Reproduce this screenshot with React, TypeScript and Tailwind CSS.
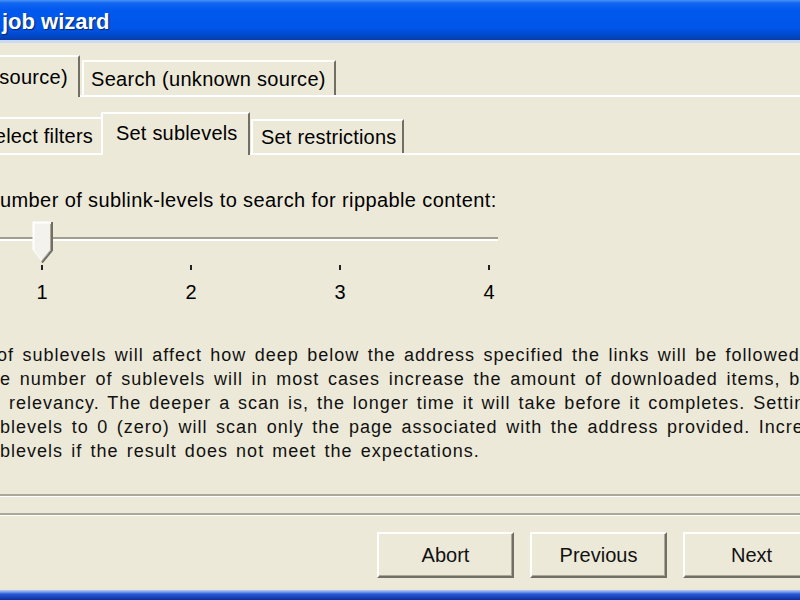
import React from "react";

const lines = [
  { text: "of sublevels will affect how deep below the address specified the links will be followed.", cls: "ml-[-3px] [word-spacing:2.4px]" },
  { text: "e number of sublevels will in most cases increase the amount of downloaded items, but", cls: "ml-[0px] [word-spacing:2.7px]" },
  { text: "relevancy. The deeper a scan is, the longer time it will take before it completes. Setting", cls: "ml-[9px] [word-spacing:1.9px]" },
  { text: "blevels to 0 (zero) will scan only the page associated with the address provided. Increase", cls: "ml-[0px] [word-spacing:2.6px]" },
  { text: "blevels if the result does not meet the expectations.", cls: "ml-[0px] [word-spacing:2.2px]" },
];

function Thumb() {
  return (
    <svg width="22" height="43" viewBox="0 0 22 43" className="absolute left-[32px] top-0">
      <path d="M1 1 H20 V29 L10 41 L1 29 Z" fill="#f3f2ec" />
      <path d="M1.5 29 V1.5 H19.5" fill="none" stroke="#ffffff" strokeWidth="2" />
      <path d="M1.5 29 L10 40" fill="none" stroke="#f8f8f4" strokeWidth="1.5" />
      <path d="M20 1 V29.5 L10 41.5" fill="none" stroke="#716f64" strokeWidth="2" />
      <path d="M18.5 3 V29 L10 39.5" fill="none" stroke="#aca899" strokeWidth="1" />
    </svg>
  );
}

function Button({ label }: { label: string }) {
  return (
    <div className="w-[137px] h-[46px] shrink-0 border-2 border-t-white border-l-white border-r-[#716f64] border-b-[#716f64] shadow-[inset_-1px_-1px_0_#aca899] bg-[#ECE9D8] text-[20px] text-[#111] flex items-center justify-center">
      {label}
    </div>
  );
}

export default function App() {
  const ticks = ["1", "2", "3", "4"];
  return (
    <div className="w-[800px] h-[600px] overflow-hidden bg-[#ECE9D8] flex flex-col font-['Liberation_Sans',Arial,sans-serif] text-black">
      {/* title bar */}
      <div className="h-[40px] shrink-0 bg-[linear-gradient(to_bottom,#4a95f7_0px,#1266f0_3px,#0058ee_10px,#0056e8_28px,#0049cc_35px,#0a3ca8_40px)] flex items-center pl-[2px] pt-[3px]">
        <span className="text-white font-bold text-[22px] leading-none [text-shadow:1px_1px_1px_#0a2473]">job wizard</span>
      </div>
      <div className="h-[3px] shrink-0 bg-[#cbdaf3]" />

      {/* outer tab strip */}
      <div className="mt-[12px] h-[42px] shrink-0 flex items-end border-b-2 border-white">
        <div className="h-[42px] w-[80px] shrink-0 -mb-[2px] bg-[#ECE9D8] border-t-2 border-t-white border-r-2 border-r-[#716f64] flex items-center justify-end pr-[10px] text-[20px] tracking-[0.3px] whitespace-nowrap">
          source)
        </div>
        <div className="ml-[2px] h-[35px] w-[254px] shrink-0 border-l-2 border-t-2 border-l-white border-t-white border-r-2 border-r-[#716f64] flex items-center pl-[7px] text-[20px] tracking-[0.3px] whitespace-nowrap">
          Search (unknown source)
        </div>
      </div>

      {/* inner tab strip */}
      <div className="mt-[15px] h-[43px] shrink-0 flex items-end border-b-2 border-white">
        <div className="h-[36px] w-[101px] shrink-0 border-t-2 border-t-white flex items-center justify-end pr-[8px] text-[20px] tracking-[0.2px] whitespace-nowrap">
          elect filters
        </div>
        <div className="h-[43px] w-[149px] shrink-0 -mb-[2px] bg-[#ECE9D8] border-l-2 border-t-2 border-l-white border-t-white border-r-2 border-r-[#716f64] flex items-center pl-[13px] pb-[4px] text-[20px] tracking-[0.2px] whitespace-nowrap">
          Set sublevels
        </div>
        <div className="ml-[1px] h-[34px] w-[153px] shrink-0 border-l-2 border-t-2 border-l-white border-t-white border-r-2 border-r-[#716f64] flex items-center pl-[8px] text-[20px] tracking-[0.2px] whitespace-nowrap">
          Set restrictions
        </div>
      </div>

      {/* label */}
      <div className="mt-[33px] h-[24px] shrink-0 leading-[24px] text-[20px] tracking-[0.4px] whitespace-nowrap">
        umber of sublink-levels to search for rippable content:
      </div>

      {/* slider */}
      <div className="mt-[9px] relative w-[500px] h-[83px] shrink-0">
        <div className="mt-[16px] h-[4px] w-[498px] border-t-2 border-t-[#a19e8f] border-b-2 border-b-white" />
        <Thumb />
        <div className="mt-[24px] ml-[32px] w-[467px] flex justify-between">
          {ticks.map((t) => (
            <div key={t} className="w-[20px] flex justify-center">
              <div className="w-[2px] h-[5px] bg-[#222]" />
            </div>
          ))}
        </div>
        <div className="mt-[10px] ml-[32px] w-[467px] flex justify-between">
          {ticks.map((t) => (
            <div key={t} className="w-[20px] text-center text-[20px] leading-[24px]">
              {t}
            </div>
          ))}
        </div>
      </div>

      {/* description */}
      <div className="mt-[39px] shrink-0 flex flex-col">
        {lines.map((l, i) => (
          <div
            key={i}
            className={`h-[24px] leading-[24px] text-[18px] tracking-[1px] whitespace-nowrap text-[#111] ${l.cls}`}
          >
            {l.text}
          </div>
        ))}
      </div>

      {/* separators */}
      <div className="mt-[31px] h-[2px] shrink-0 bg-[#aca899]" />
      <div className="h-[1px] shrink-0 bg-white" />
      <div className="mt-[16px] h-[2px] shrink-0 bg-[#aca899]" />
      <div className="h-[1px] shrink-0 bg-white" />

      {/* buttons */}
      <div className="mt-[16px] h-[46px] shrink-0 flex gap-[16px] pl-[377px]">
        <Button label="Abort" />
        <Button label="Previous" />
        <Button label="Next" />
      </div>

      {/* bottom frame */}
      <div className="mt-[12px] h-[10px] shrink-0 bg-[linear-gradient(to_bottom,#b5c9f0_0px,#7a9ce8_2px,#2a5ad8_4px,#0a2f9e_10px)]" />
    </div>
  );
}
